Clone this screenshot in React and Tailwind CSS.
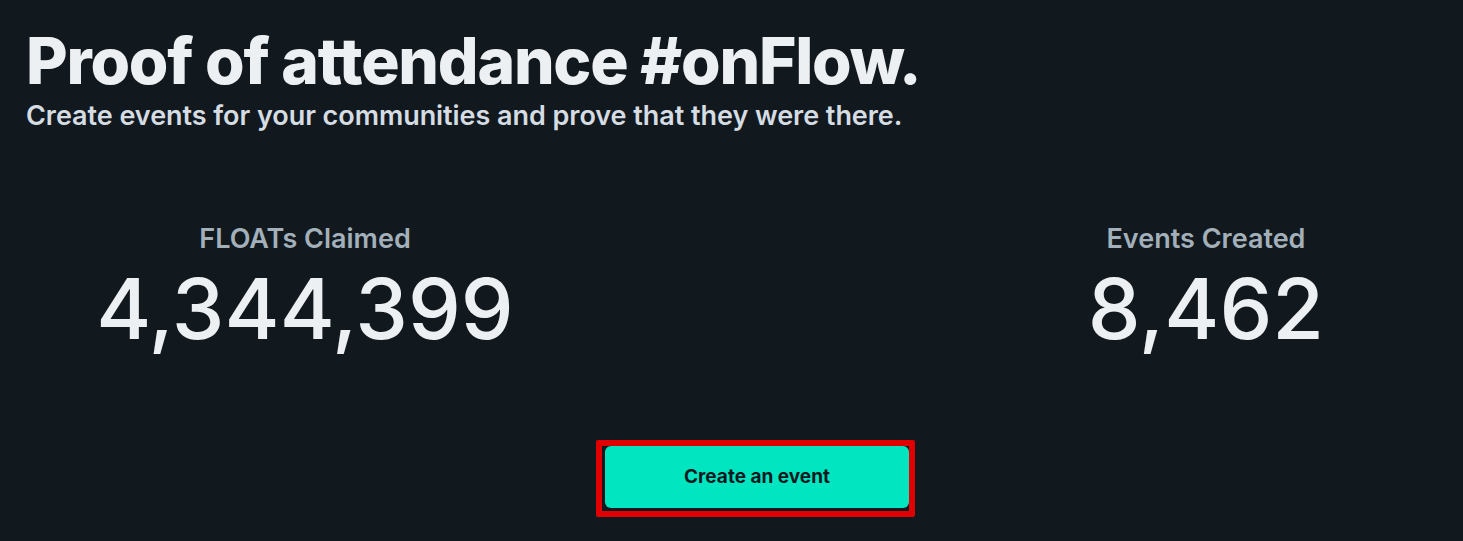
export default function App() {
  const font = { fontFamily: "Inter, 'Noto Sans', sans-serif" };
  return (
    <div className="w-[1463px] h-[541px] bg-[#11191f] overflow-hidden" style={font}>
      <div className="pl-[26px] pt-[29px]">
        <h1 className="text-[64px] leading-[64px] font-extrabold text-[#edf0f3] tracking-[-1.2px]">
          Proof of attendance #onFlow.
        </h1>
        <p className="mt-[7px] text-[27px] leading-[32px] font-semibold text-[#d5dce2] tracking-[-0.05px]">
          Create events for your communities and prove that they were there.
        </p>
      </div>
      <div className="grid grid-cols-[558px_1fr_514px] pl-[26px] mt-[91px]">
        <div className="flex flex-col items-center">
          <div className="text-[27px] leading-[32px] font-semibold text-[#a3b0ba]">FLOATs Claimed</div>
          <div className="mt-[12px] text-[84px] leading-[84px] font-medium text-[#edf0f3]">4,344,399</div>
        </div>
        <div />
        <div className="flex flex-col items-center">
          <div className="text-[27px] leading-[32px] font-semibold text-[#a3b0ba]">Events Created</div>
          <div className="mt-[12px] text-[84px] leading-[84px] font-medium text-[#edf0f3]">8,462</div>
        </div>
      </div>
      <div className="flex justify-center mt-[89px] pl-[48px]">
        <div className="border-[6px] border-[#e00000] rounded-[2px] pl-[3px] pb-[3px] pt-0 pr-0">
          <button className="w-[304px] h-[62px] rounded-[6px] bg-[#01e5c1] text-[#11191f] text-[19px] font-bold">
            Create an event
          </button>
        </div>
      </div>
    </div>
  );
}
